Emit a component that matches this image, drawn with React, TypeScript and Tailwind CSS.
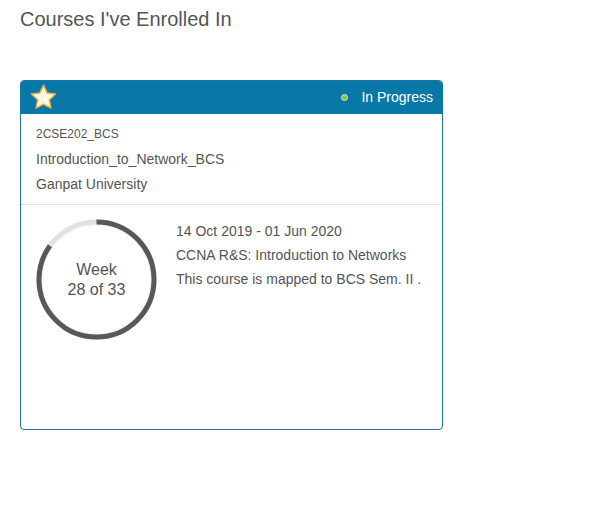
export default function App() {
  const week = 28;
  const total = 33;
  const r = 57.5;
  const c = 2 * Math.PI * r;
  const done = (week / total) * c;

  return (
    <div className="min-h-[512px] w-[607px] bg-white font-['Liberation_Sans',Arial,sans-serif] text-[#555]">
      <div className="px-5 pt-[7px]">
        <h1 className="text-[20px] leading-[24px] text-[#555]">Courses I've Enrolled In</h1>

        <div className="mt-[49px] flex h-[350px] w-[423px] flex-col overflow-hidden rounded-[4px] border border-[#1a78a3]">
          {/* Header */}
          <div className="flex h-[33px] items-center justify-between bg-[#0878a9] pl-[8px] pr-[9px]">
            <svg width="29" height="29" viewBox="0 0 24 24">
              <path
                d="M12 1.8l3.05 6.4 6.95.85-5.1 4.85 1.3 6.9L12 17.4l-6.2 3.4 1.3-6.9L2 9.05l6.95-.85z"
                fill="#fff8dc"
                stroke="#e3b341"
                strokeWidth="1.2"
                strokeLinejoin="round"
              />
            </svg>
            <div className="flex items-center">
              <span className="mr-[13px] h-[7px] w-[7px] rounded-full border border-[#d7ecb0] bg-[#8bc34a]" />
              <span className="text-[14px] text-white">In Progress</span>
            </div>
          </div>

          {/* Course info */}
          <div className="border-b border-[#e3e3e3] px-[15px] pb-[11px] pt-[12px]">
            <div className="text-[12px] leading-[16px]">2CSE202_BCS</div>
            <div className="mt-[8px] text-[14px] leading-[18px]">Introduction_to_Network_BCS</div>
            <div className="mt-[7px] text-[14px] leading-[18px]">Ganpat University</div>
          </div>

          {/* Body */}
          <div className="flex flex-1 gap-[19px] pl-[15px] pt-[14px]">
            <div className="relative h-[121px] w-[121px] shrink-0">
              <svg width="121" height="121" viewBox="0 0 121 121" className="absolute inset-0">
                <circle cx="60.5" cy="60.5" r={r} fill="none" stroke="#e2e2e2" strokeWidth="5" />
                <circle cx="60.5" cy="60.5" r="54.5" fill="none" stroke="#f2f2f2" strokeWidth="1" />
                <circle
                  cx="60.5"
                  cy="60.5"
                  r={r}
                  fill="none"
                  stroke="#58585a"
                  strokeWidth="5"
                  strokeDasharray={`${done} ${c}`}
                  transform="rotate(-90 60.5 60.5)"
                />
              </svg>
              <div className="absolute inset-0 flex flex-col items-center justify-center text-[16px] leading-[20px] text-[#555]">
                <span>Week</span>
                <span>
                  {week} of {total}
                </span>
              </div>
            </div>
            <div className="text-[14px] leading-[24px]">
              <div>14 Oct 2019 - 01 Jun 2020</div>
              <div>CCNA R&amp;S: Introduction to Networks</div>
              <div>This course is mapped to BCS Sem. II .</div>
            </div>
          </div>
        </div>
      </div>
    </div>
  );
}
